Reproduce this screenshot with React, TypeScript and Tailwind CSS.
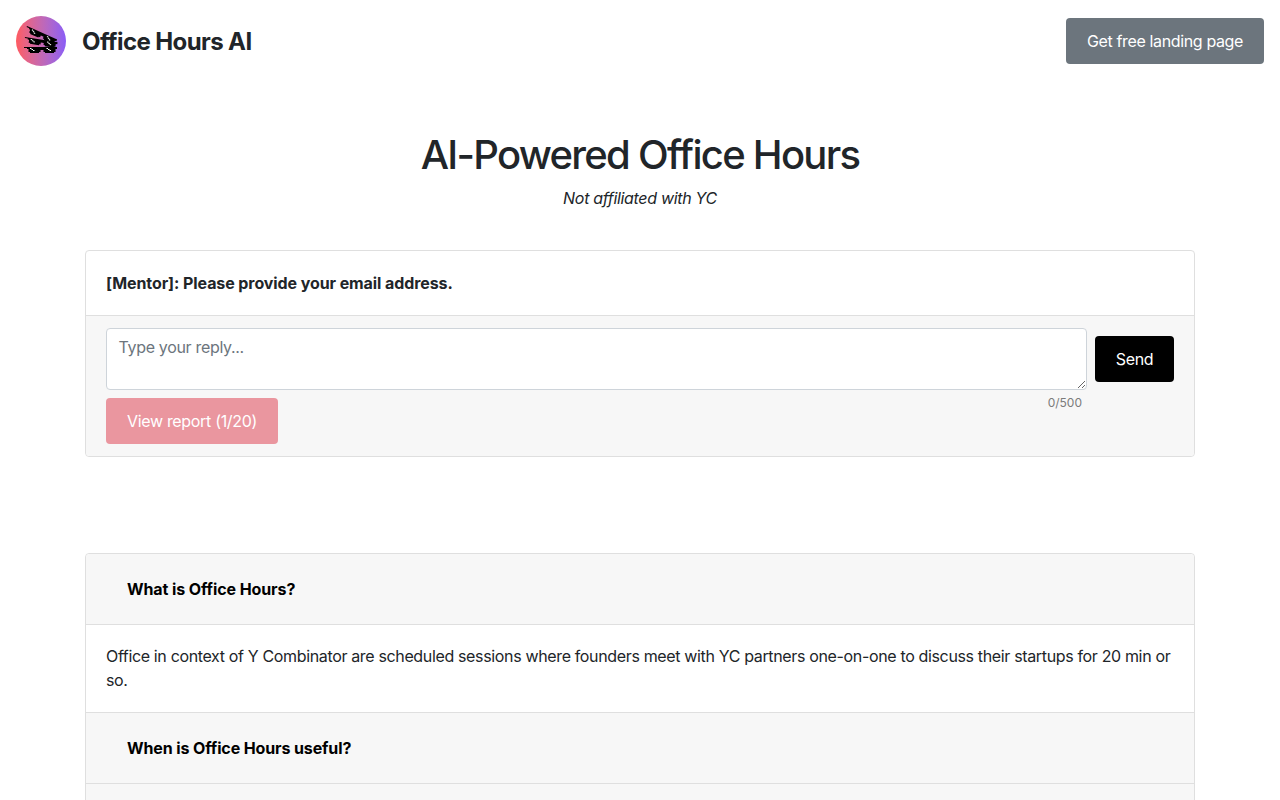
const Glasses = ({ x, y, r }: { x: number; y: number; r: number }) => (
  <g transform={`translate(${x} ${y}) rotate(${r}) scale(1.5 1)`}>
    <path d="M0 0h22v2h-1v3h-1v1h-6v-1h-1v-2h-2v2h-1v1h-6v-1h-1v-3h-1v-1h-2z" fill="#000" />
    <path d="M4 1h1v1h-1zM5 2h1v1h-1zM6 3h1v1h-1zM15 1h1v1h-1zM16 2h1v1h-1zM17 3h1v1h-1z" fill="#fff" />
  </g>
);

const Logo = () => (
  <div className="h-[50px] w-[50px] shrink-0 rounded-full bg-gradient-to-r from-[#ff5a5f] to-[#8b5cf6]">
    <svg width="50" height="50" viewBox="0 0 50 50">
      <Glasses x={11} y={10} r={24} />
      <Glasses x={9} y={21} r={9} />
      <Glasses x={8} y={31} r={0} />
    </svg>
  </div>
);

export default function App() {
  return (
    <div className="h-screen overflow-hidden bg-white font-['Inter',sans-serif] text-base leading-6 tracking-[-0.32px] text-[#212529]">
      <header className="flex items-center justify-between p-4">
        <div className="flex items-center gap-4">
          <Logo />
          <span className="pt-0.5 text-2xl font-bold tracking-[-0.6px]">Office Hours AI</span>
        </div>
        <button className="h-[46px] w-[198px] rounded bg-[#6c757d] tracking-[-0.36px] text-white">Get free landing page</button>
      </header>

      <main className="mx-auto w-[1110px]">
        <div className="mt-[49px] text-center">
          <h1 className="text-[40px] leading-[48px] font-medium tracking-[-1.72px]">AI-Powered Office Hours</h1>
          <p className="mt-[7px] italic">Not affiliated with YC</p>
        </div>

        <section className="mt-10 rounded border border-[#dfdfdf]">
          <div className="border-b border-[#dfdfdf] px-5 py-5 font-bold tracking-[-0.09px]">[Mentor]: Please provide your email address.</div>
          <div className="rounded-b bg-[#f7f7f7] px-5 py-3">
            <div className="flex items-center gap-2">
              <textarea
                placeholder="Type your reply..."
                className="h-[62px] flex-1 rounded border border-[#ced4da] bg-white py-1.5 pr-3 pl-[11.5px] placeholder:text-[#6c757d]"
              />
              <button className="h-[46px] w-[79px] rounded bg-black text-white">Send</button>
            </div>
            <div className="flex items-start justify-between">
              <button className="mt-2 h-[46px] w-[172px] rounded bg-[#ea969f] text-white">View report (1/20)</button>
              <span className="mt-1 mr-[92px] text-xs leading-[18px] tracking-normal text-[#7b7b7b]">0/500</span>
            </div>
          </div>
        </section>

        <section className="mt-24 rounded border border-[#dfdfdf]">
          <div className="rounded-t bg-[#f7f7f7] px-[41px] py-[23px] font-bold tracking-[-0.1px] text-black">What is Office Hours?</div>
          <div className="border-y border-[#dfdfdf] px-5 pt-[19px] pb-5 tracking-[-0.35px]">
            Office in context of Y Combinator are scheduled sessions where founders meet with YC partners one-on-one to discuss their startups for 20 min or so.
          </div>
          <div className="bg-[#f7f7f7] px-[41px] py-[23px] font-bold tracking-[-0.12px] text-black">When is Office Hours useful?</div>
          <div className="h-10 border-t border-[#dfdfdf] bg-[#f7f7f7]" />
        </section>
      </main>
    </div>
  );
}
